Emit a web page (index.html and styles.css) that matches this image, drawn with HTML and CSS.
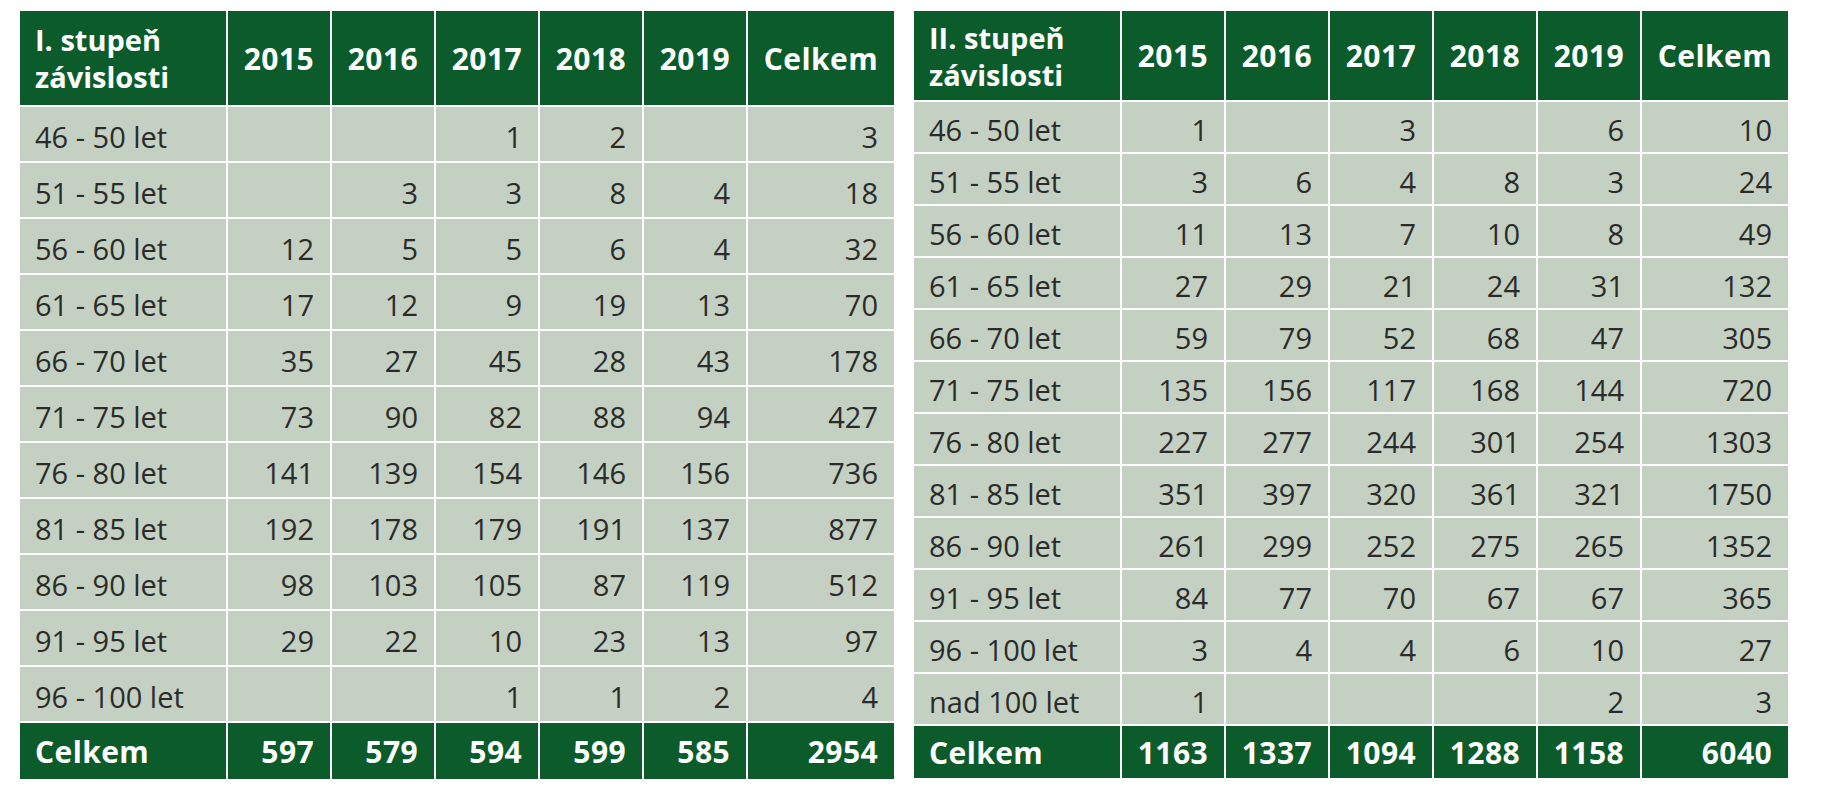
FILE: index.html
```html
<!DOCTYPE html>
<html lang="cs">
<head>
<meta charset="utf-8">
<title>Stupně závislosti</title>
<link rel="stylesheet" href="styles.css">
</head>
<body>
<div class="page">
  <table class="grid grid-a">
    <colgroup>
      <col class="c-label"><col class="c-y"><col class="c-y"><col class="c-y"><col class="c-y"><col class="c-y"><col class="c-tot">
    </colgroup>
    <thead>
      <tr><th class="lbl">I. stupeň<br>závislosti</th><th>2015</th><th>2016</th><th>2017</th><th>2018</th><th>2019</th><th>Celkem</th></tr>
    </thead>
    <tbody>
      <tr><td class="lbl">46 - 50 let</td><td></td><td></td><td>1</td><td>2</td><td></td><td>3</td></tr>
      <tr><td class="lbl">51 - 55 let</td><td></td><td>3</td><td>3</td><td>8</td><td>4</td><td>18</td></tr>
      <tr><td class="lbl">56 - 60 let</td><td>12</td><td>5</td><td>5</td><td>6</td><td>4</td><td>32</td></tr>
      <tr><td class="lbl">61 - 65 let</td><td>17</td><td>12</td><td>9</td><td>19</td><td>13</td><td>70</td></tr>
      <tr><td class="lbl">66 - 70 let</td><td>35</td><td>27</td><td>45</td><td>28</td><td>43</td><td>178</td></tr>
      <tr><td class="lbl">71 - 75 let</td><td>73</td><td>90</td><td>82</td><td>88</td><td>94</td><td>427</td></tr>
      <tr><td class="lbl">76 - 80 let</td><td>141</td><td>139</td><td>154</td><td>146</td><td>156</td><td>736</td></tr>
      <tr><td class="lbl">81 - 85 let</td><td>192</td><td>178</td><td>179</td><td>191</td><td>137</td><td>877</td></tr>
      <tr><td class="lbl">86 - 90 let</td><td>98</td><td>103</td><td>105</td><td>87</td><td>119</td><td>512</td></tr>
      <tr><td class="lbl">91 - 95 let</td><td>29</td><td>22</td><td>10</td><td>23</td><td>13</td><td>97</td></tr>
      <tr><td class="lbl">96 - 100 let</td><td></td><td></td><td>1</td><td>1</td><td>2</td><td>4</td></tr>
    </tbody>
    <tfoot>
      <tr><th class="lbl">Celkem</th><th>597</th><th>579</th><th>594</th><th>599</th><th>585</th><th>2954</th></tr>
    </tfoot>
  </table>

  <table class="grid grid-b">
    <colgroup>
      <col class="c-label"><col class="c-y"><col class="c-y"><col class="c-y"><col class="c-y"><col class="c-y"><col class="c-tot">
    </colgroup>
    <thead>
      <tr><th class="lbl">II. stupeň<br>závislosti</th><th>2015</th><th>2016</th><th>2017</th><th>2018</th><th>2019</th><th>Celkem</th></tr>
    </thead>
    <tbody>
      <tr><td class="lbl">46 - 50 let</td><td>1</td><td></td><td>3</td><td></td><td>6</td><td>10</td></tr>
      <tr><td class="lbl">51 - 55 let</td><td>3</td><td>6</td><td>4</td><td>8</td><td>3</td><td>24</td></tr>
      <tr><td class="lbl">56 - 60 let</td><td>11</td><td>13</td><td>7</td><td>10</td><td>8</td><td>49</td></tr>
      <tr><td class="lbl">61 - 65 let</td><td>27</td><td>29</td><td>21</td><td>24</td><td>31</td><td>132</td></tr>
      <tr><td class="lbl">66 - 70 let</td><td>59</td><td>79</td><td>52</td><td>68</td><td>47</td><td>305</td></tr>
      <tr><td class="lbl">71 - 75 let</td><td>135</td><td>156</td><td>117</td><td>168</td><td>144</td><td>720</td></tr>
      <tr><td class="lbl">76 - 80 let</td><td>227</td><td>277</td><td>244</td><td>301</td><td>254</td><td>1303</td></tr>
      <tr><td class="lbl">81 - 85 let</td><td>351</td><td>397</td><td>320</td><td>361</td><td>321</td><td>1750</td></tr>
      <tr><td class="lbl">86 - 90 let</td><td>261</td><td>299</td><td>252</td><td>275</td><td>265</td><td>1352</td></tr>
      <tr><td class="lbl">91 - 95 let</td><td>84</td><td>77</td><td>70</td><td>67</td><td>67</td><td>365</td></tr>
      <tr><td class="lbl">96 - 100 let</td><td>3</td><td>4</td><td>4</td><td>6</td><td>10</td><td>27</td></tr>
      <tr><td class="lbl">nad 100 let</td><td>1</td><td></td><td></td><td></td><td>2</td><td>3</td></tr>
    </tbody>
    <tfoot>
      <tr><th class="lbl">Celkem</th><th>1163</th><th>1337</th><th>1094</th><th>1288</th><th>1158</th><th>6040</th></tr>
    </tfoot>
  </table>
</div>
</body>
</html>
```

FILE: styles.css
```css
html, body {
  margin: 0;
  padding: 0;
  background: #ffffff;
}

.page {
  display: flex;
  align-items: flex-start;
  gap: 20px;
  padding: 11px 0 0 20px;
  font-family: "Open Sans", "Noto Sans", "DejaVu Sans", sans-serif;
}

.grid {
  border-collapse: separate;
  border-spacing: 0;
  table-layout: fixed;
  width: 874px;
}

.c-label { width: 208px; }
.c-y { width: 104px; }
.c-tot { width: 146px; }

.grid th,
.grid td {
  border-right: 2px solid #ffffff;
  border-bottom: 2px solid #ffffff;
  padding: 0 16px 0 15px;
  text-align: right;
  vertical-align: middle;
  white-space: nowrap;
}

.grid th:last-child,
.grid td:last-child {
  border-right: none;
}

.grid tfoot th {
  border-bottom: none;
}

.grid thead th,
.grid tfoot th {
  background: #0b5b2b;
  color: #ffffff;
  font-weight: 700;
  font-size: 30px;
  line-height: 37px;
  letter-spacing: 0.4px;
}

.grid thead th.lbl {
  font-size: 29px;
  letter-spacing: 0;
}

.grid td {
  background: #c3d0c2;
  color: #2b2b2b;
  font-size: 29px;
  font-weight: 400;
  padding-top: 4px;
}

.grid .lbl {
  text-align: left;
}

.grid-a thead tr { height: 96px; }
.grid-a tbody tr,
.grid-a tfoot tr { height: 56px; }

.grid-b thead tr { height: 91px; }
.grid-b tbody tr,
.grid-b tfoot tr { height: 52px; }
```
